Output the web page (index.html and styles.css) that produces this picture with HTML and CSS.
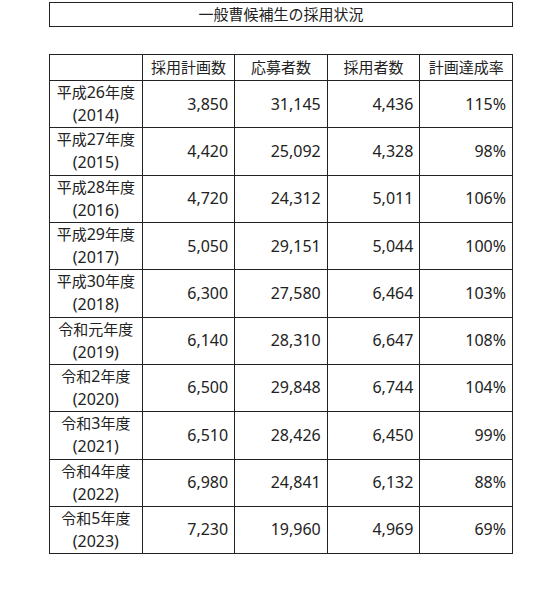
FILE: index.html
```html
<!DOCTYPE html>
<html lang="ja">
<head>
    <meta charset="UTF-8">
    <meta name="viewport" content="width=device-width, initial-scale=1.0">
    <title>一般曹候補生の採用状況</title>
    <link rel="stylesheet" href="styles.css">
</head>
<body>
    <div class="wrap">
        <div class="caption">一般曹候補生の採用状況</div>

        <table class="stats">
            <thead>
                <tr>
                    <th></th>
                    <th>採用計画数</th>
                    <th>応募者数</th>
                    <th>採用者数</th>
                    <th>計画達成率</th>
                </tr>
            </thead>
            <tbody>
                <tr><th>平成<span class="num">26</span>年度<br><span class="num">(2014)</span></th><td>3,850</td><td>31,145</td><td>4,436</td><td>115%</td></tr>
                <tr><th>平成<span class="num">27</span>年度<br><span class="num">(2015)</span></th><td>4,420</td><td>25,092</td><td>4,328</td><td>98%</td></tr>
                <tr><th>平成<span class="num">28</span>年度<br><span class="num">(2016)</span></th><td>4,720</td><td>24,312</td><td>5,011</td><td>106%</td></tr>
                <tr><th>平成<span class="num">29</span>年度<br><span class="num">(2017)</span></th><td>5,050</td><td>29,151</td><td>5,044</td><td>100%</td></tr>
                <tr><th>平成<span class="num">30</span>年度<br><span class="num">(2018)</span></th><td>6,300</td><td>27,580</td><td>6,464</td><td>103%</td></tr>
                <tr><th>令和元年度<br><span class="num">(2019)</span></th><td>6,140</td><td>28,310</td><td>6,647</td><td>108%</td></tr>
                <tr><th>令和<span class="num">2</span>年度<br><span class="num">(2020)</span></th><td>6,500</td><td>29,848</td><td>6,744</td><td>104%</td></tr>
                <tr><th>令和<span class="num">3</span>年度<br><span class="num">(2021)</span></th><td>6,510</td><td>28,426</td><td>6,450</td><td>99%</td></tr>
                <tr><th>令和<span class="num">4</span>年度<br><span class="num">(2022)</span></th><td>6,980</td><td>24,841</td><td>6,132</td><td>88%</td></tr>
                <tr><th>令和<span class="num">5</span>年度<br><span class="num">(2023)</span></th><td>7,230</td><td>19,960</td><td>4,969</td><td>69%</td></tr>
            </tbody>
        </table>
    </div>
</body>
</html>
```

FILE: styles.css
```css
body {
    margin: 0;
    background: #fff;
    color: #222;
    font-family: "Noto Sans", "Noto Sans CJK JP", sans-serif;
    font-size: 15px;
}
.wrap {
    width: 464px;
    padding: 2px 0 0 49px;
}
.caption {
    border: 1px solid #222;
    text-align: center;
    height: 23px;
    line-height: 23px;
    margin-bottom: 27px;
}
.stats {
    width: 464px;
    border-collapse: collapse;
    table-layout: fixed;
}
.stats th,
.stats td {
    border: 1px solid #222;
    line-height: 23.15px;
    padding: 0 6px;
    font-weight: normal;
}
.stats thead th {
    text-align: center;
    line-height: 25px;
}
.stats tbody th {
    text-align: center;
}
.stats td {
    text-align: right;
    font-size: 16px;
}
.num {
    font-size: 16px;
    line-height: 1;
}
```
